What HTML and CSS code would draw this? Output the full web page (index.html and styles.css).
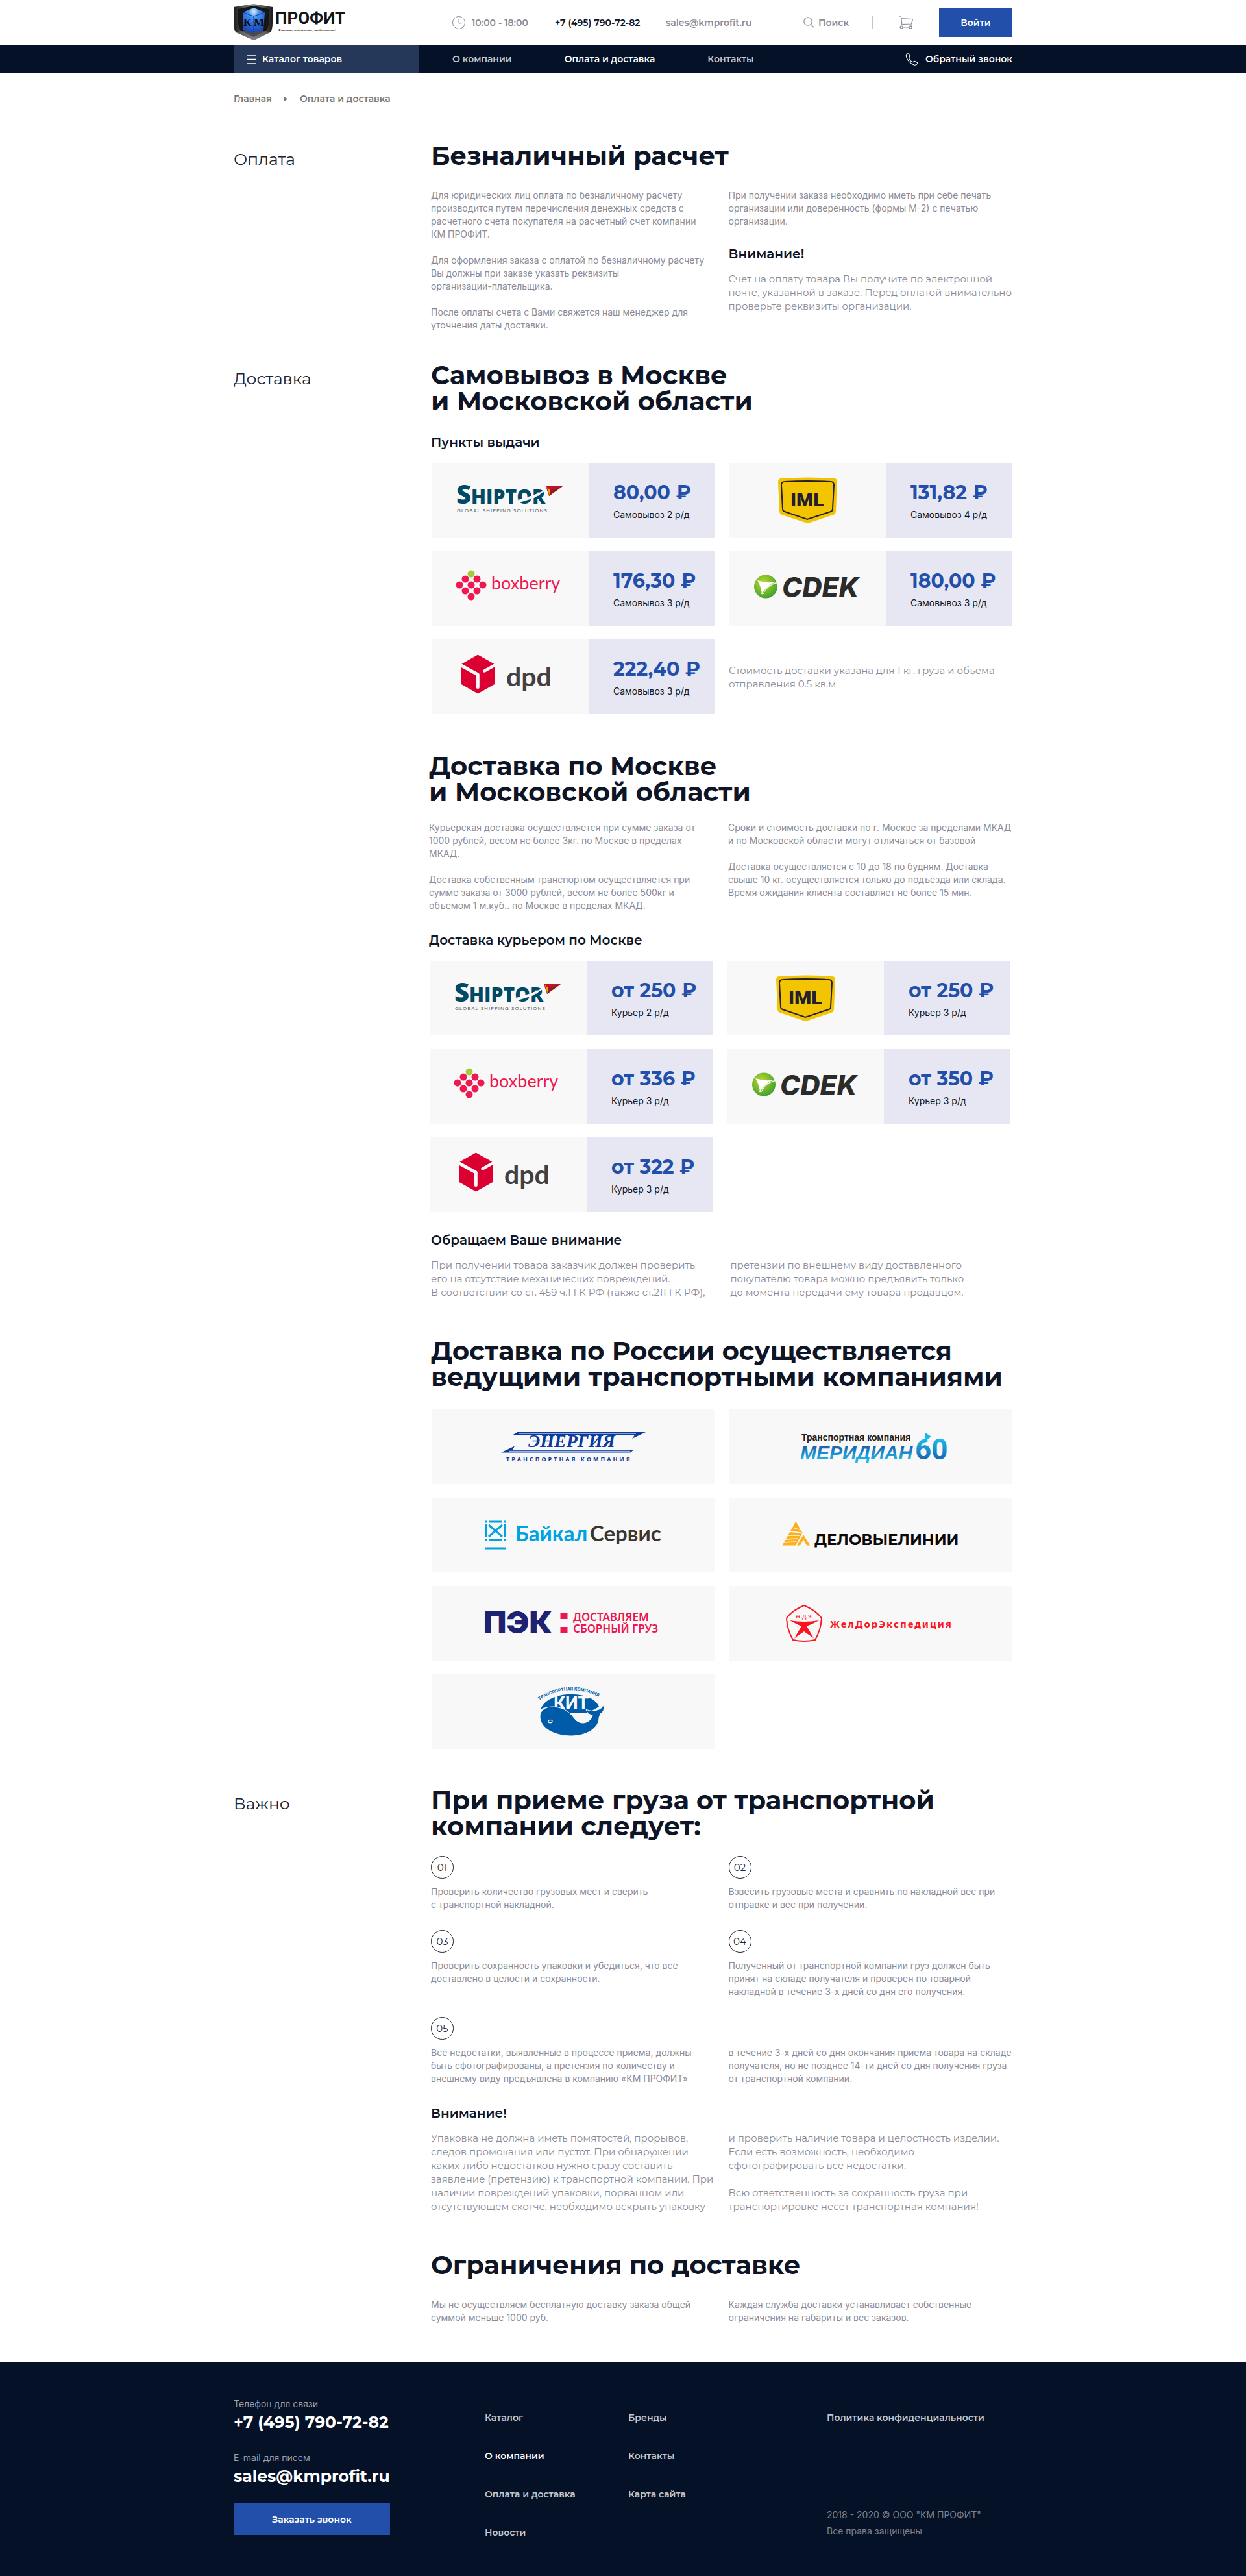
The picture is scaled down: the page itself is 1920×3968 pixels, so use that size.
FILE: index.html
```html
<!DOCTYPE html>
<html lang="ru">
<head>
<meta charset="utf-8">
<meta name="viewport" content="width=device-width, initial-scale=1">
<title>Оплата и доставка — КМ ПРОФИТ</title>
<link rel="stylesheet" href="styles.css">
</head>
<body>

<!-- Shared gradients -->
<svg class="sprite" aria-hidden="true">
  <defs>
    <radialGradient id="globe" cx="40%" cy="35%" r="75%"><stop offset="0" stop-color="#c3d82c"/><stop offset="1" stop-color="#2f9a2f"/></radialGradient>
    <linearGradient id="sky" x1="0" y1="0" x2="0" y2="1"><stop offset="0.2" stop-color="#1a63ae"/><stop offset="0.85" stop-color="#1fb6e8"/></linearGradient>
    <linearGradient id="sea" x1="0" y1="0" x2="0" y2="1"><stop offset="0.2" stop-color="#1fb6e8"/><stop offset="0.85" stop-color="#1460ac"/></linearGradient>
    <linearGradient id="metal" x1="0" y1="0" x2="1" y2="0"><stop offset="0" stop-color="#1c1c1c"/><stop offset="0.5" stop-color="#8d8d8d"/><stop offset="1" stop-color="#1c1c1c"/></linearGradient>
    <radialGradient id="cube" cx="50%" cy="15%" r="80%"><stop offset="0" stop-color="#d8f0ff"/><stop offset="0.3" stop-color="#3f8fee"/><stop offset="1" stop-color="#1c48b8"/></radialGradient>
  </defs>
</svg>

<!-- Carrier logos, copied into the price cards by logos.js -->
<template id="shiptor"><svg class="logo" viewBox="0 0 242 115" role="img" aria-label="Shiptor">
  <text class="lg-shiptor" x="38" y="63"><tspan class="lg-shiptor-cap">S</tspan>HIPTOR</text>
  <path d="M124 66 136 56l20-6 24-10-22 14-19 6z" fill="#f8f8f8"/>
  <path d="M176 36h26l-21 15z" fill="#c8102e"/><path d="M182 42 202 36 181 51z" fill="#8a2020"/><path d="M176 36l7 6-2 9-1-9z" fill="#f5a800"/>
  <text class="lg-shiptor-sub" x="39" y="76">GLOBAL SHIPPING SOLUTIONS</text>
</svg></template>
<template id="iml"><svg class="logo" viewBox="0 0 242 115" role="img" aria-label="IML">
  <path d="M81 24q40-3 81 0 5 0 5 5l-2 45q0 5-4 6l-36 12q-4 1-7 0L82 80q-4-1-4-6l-2-45q0-5 5-5z" fill="#f2c500"/>
  <path d="M86 29q36-2 71 0 5 0 5 5l-2 37q0 3-3 4l-36 12-35-12q-3-1-3-4l-2-37q0-5 5-5z" fill="none" stroke="#251e33" stroke-width="2"/>
  <text class="lg-iml" x="95" y="67">IML</text>
</svg></template>
<template id="boxberry"><svg class="logo" viewBox="0 0 242 115" role="img" aria-label="Boxberry">
  <circle cx="61" cy="35" r="5.5" fill="#a4cb38"/>
  <g fill="#f01850"><circle cx="52" cy="43" r="5.5"/><circle cx="70" cy="43" r="5.5"/><circle cx="43" cy="52" r="5.5"/><circle cx="61" cy="52" r="5.5"/><circle cx="79" cy="52" r="5.5"/><circle cx="52" cy="61" r="5.5"/><circle cx="70" cy="61" r="5.5"/><circle cx="61" cy="70" r="5.5"/></g>
  <text class="lg-boxberry" x="92" y="59">boxberry</text>
</svg></template>
<template id="cdek"><svg class="logo" viewBox="0 0 242 115" role="img" aria-label="CDEK">
  <circle cx="57" cy="54.5" r="18" fill="url(#globe)"/>
  <path d="M44 45q15 5 29 2-16 6-22 20-1-13-7-22z" fill="#fff"/><path d="M53 66q6-13 21-18M50 66q8-14 24-17" stroke="#fff" fill="none"/>
  <text class="lg-cdek" x="82" y="71">CDEK</text>
</svg></template>
<template id="dpd"><svg class="logo" viewBox="0 0 242 115" role="img" aria-label="DPD">
  <path d="M71.3 23.5 98 38.5v30L71.3 83.5 45 68.5v-30z" fill="#dc0032"/>
  <path d="M43 38.5 71.3 54v19.5" fill="none" stroke="#f8f8f8" stroke-width="5" stroke-linejoin="round" stroke-linecap="round"/>
  <path d="M100 38 81.5 48.5" stroke="#f8f8f8" stroke-width="4.5" stroke-linecap="round"/>
  <text class="lg-dpd" x="115" y="72">dpd</text>
</svg></template>

<header class="header">
  <div class="container topbar">
    <a class="brand" href="#" aria-label="КМ Профит">
      <svg width="180" height="60" viewBox="0 0 180 60">
        <path d="M31 1 60 6v24q0 12-4 15L31 57 4 45Q0 42 0 30V6z" fill="url(#metal)"/>
        <path d="M31 4 54 9v20q0 10-5 14L31 52 12 43Q7 39 7 29V9z" fill="#161616"/>
        <path d="M4 45 31 37 56 45 31 57z" fill="#777" opacity=".55"/>
        <path d="M31 7 48 14 46 41 31 46 15 41 14 14z" fill="url(#cube)"/>
        <path d="M31 19v27M14 14l17 6 17-6" stroke="#123a9c" fill="none"/>
        <text class="lg-km" x="15" y="35">К</text><text class="lg-km" x="31" y="35">М</text>
        <text class="lg-profit" x="64" y="32">ПРОФИТ</text>
        <text class="lg-tagline" x="69" y="43">Качество, надежность, стабильность!</text>
      </svg>
    </a>
    <div class="hours">
      <svg width="20" height="20" viewBox="0 0 20 20" fill="none" stroke="#8b8b98"><circle cx="10" cy="10" r="9.5"/><path d="M10 5v6h4"/></svg>
      10:00 - 18:00
    </div>
    <a class="phone" href="tel:+74957907282">+7 (495) 790-72-82</a>
    <a class="mail" href="mailto:sales@kmprofit.ru">sales@kmprofit.ru</a>
    <button class="search" type="button">
      <svg width="17" height="17" viewBox="0 0 17 17" fill="none" stroke="#8b8b98" stroke-width="1.2"><circle cx="7" cy="7" r="6.2"/><path d="M11.500 11.500 16.500 16.500"/></svg>
      Поиск
    </button>
    <a class="cart" href="#" aria-label="Корзина">
      <svg width="22" height="21" viewBox="0 0 22 21" fill="none" stroke="#8b8b98" stroke-width="1.2"><path d="M0 1h2.500q1 0 1 1L5 14.500h14M4 4.500l17.500 1-2 7.500-14.500.500M5 14.500q-2 0-1.500 2.500M19 14.500V17M6 18h10"/><circle cx="4" cy="18" r="2"/><circle cx="18" cy="18" r="2"/></svg>
    </a>
    <button class="btn login" type="button">Войти</button>
  </div>
  <nav class="nav">
    <div class="container nav-row">
      <a class="catalog" href="#">
        <svg width="15" height="15" viewBox="0 0 15 15" stroke="#fff" stroke-width="1.4"><path d="M0 1h15M0 7.500h15M0 14h15"/></svg>
        Каталог товаров
      </a>
      <ul class="menu">
        <li><a href="#">О компании</a></li>
        <li><a href="#" class="current">Оплата и доставка</a></li>
        <li><a href="#">Контакты</a></li>
      </ul>
      <a class="callback" href="#">
        <svg width="20" height="20" viewBox="0 0 20 20" fill="none" stroke="#fff" stroke-width="1.1"><path d="M3.500 1Q5 .500 5.700 2L7 5q.500 1.200-.700 2-1.300.900-.600 2.300 1.500 3.200 4.800 5.200 1.200.600 2.100-.500 1-1.200 2.200-.600l3 1.500q1.400.800.700 2.100-1.500 2.500-4.500 2.200-4-.700-8-5Q1.700 9.500 1.200 5 1.200 2.200 3.500 1z"/></svg>
        Обратный звонок
      </a>
    </div>
  </nav>
</header>

<main class="container">
  <nav class="crumbs">
    <a href="#">Главная</a>
    <svg width="5" height="7" viewBox="0 0 5 7"><path d="M0 0 5 3.500 0 7z" fill="#777"/></svg>
    <a href="#">Оплата и доставка</a>
  </nav>

  <section class="section">
    <p class="label">Оплата</p>
    <div class="content">
      <div class="block">
        <h2>Безналичный расчет</h2>
        <div class="cols after-title">
          <div class="text">
            <p>Для юридических лиц оплата по безналичному расчету<br>производится путем перечисления денежных средств с<br>расчетного счета покупателя на расчетный счет компании<br>КМ ПРОФИТ.</p>
            <p>Для оформления заказа с оплатой по безналичному расчету<br>Вы должны при заказе указать реквизиты<br>организации-плательщика.</p>
            <p>После оплаты счета с Вами свяжется наш менеджер для<br>уточнения даты доставки.</p>
          </div>
          <div class="aside">
            <div class="text"><p>При получении заказа необходимо иметь при себе печать<br>организации или доверенность (формы М-2) с печатью<br>организации.</p></div>
            <h3>Внимание!</h3>
            <p class="note">Счет на оплату товара Вы получите по электронной<br>почте, указанной в заказе. Перед оплатой внимательно<br>проверьте реквизиты организации.</p>
          </div>
        </div>
      </div>
    </div>
  </section>

  <section class="section">
    <p class="label">Доставка</p>
    <div class="content">
      <div class="block">
        <h2>Самовывоз в Москве<br>и Московской области</h2>
        <h3>Пункты выдачи</h3>
        <ul class="cards">
          <li class="card" data-logo="shiptor"><div class="price"><strong>80,00 ₽</strong><span>Самовывоз 2 р/д</span></div></li>
          <li class="card" data-logo="iml"><div class="price"><strong>131,82 ₽</strong><span>Самовывоз 4 р/д</span></div></li>
          <li class="card" data-logo="boxberry"><div class="price"><strong>176,30 ₽</strong><span>Самовывоз 3 р/д</span></div></li>
          <li class="card" data-logo="cdek"><div class="price"><strong>180,00 ₽</strong><span>Самовывоз 3 р/д</span></div></li>
          <li class="card" data-logo="dpd"><div class="price"><strong>222,40 ₽</strong><span>Самовывоз 3 р/д</span></div></li>
          <li class="card-note note">Стоимость доставки указана для 1 кг. груза и объема<br>отправления 0.5 кв.м</li>
        </ul>
      </div>

      <div class="block courier">
        <h2>Доставка по Москве<br>и Московской области</h2>
        <div class="cols">
          <div class="text">
            <p>Курьерская доставка осуществляется при сумме заказа от<br>1000 рублей, весом не более 3кг. по Москве в пределах<br>МКАД.</p>
            <p>Доставка собственным транспортом осуществляется при<br>сумме заказа от 3000 рублей, весом не более 500кг и<br>объемом 1 м.куб.. по Москве в пределах МКАД.</p>
          </div>
          <div class="text">
            <p>Сроки и стоимость доставки по г. Москве за пределами МКАД<br>и по Московской области могут отличаться от базовой</p>
            <p>Доставка осуществляется с 10 до 18 по будням. Доставка<br>свыше 10 кг. осуществляется только до подъезда или склада.<br>Время ожидания клиента составляет не более 15 мин.</p>
          </div>
        </div>
        <h3>Доставка курьером по Москве</h3>
        <ul class="cards">
          <li class="card" data-logo="shiptor"><div class="price"><strong>от 250 ₽</strong><span>Курьер 2 р/д</span></div></li>
          <li class="card" data-logo="iml"><div class="price"><strong>от 250 ₽</strong><span>Курьер 3 р/д</span></div></li>
          <li class="card" data-logo="boxberry"><div class="price"><strong>от 336 ₽</strong><span>Курьер 3 р/д</span></div></li>
          <li class="card" data-logo="cdek"><div class="price"><strong>от 350 ₽</strong><span>Курьер 3 р/д</span></div></li>
          <li class="card" data-logo="dpd"><div class="price"><strong>от 322 ₽</strong><span>Курьер 3 р/д</span></div></li>
        </ul>
      </div>

      <div class="attention">
        <h3>Обращаем Ваше внимание</h3>
        <div class="cols note">
          <p>При получении товара заказчик должен проверить<br>его на отсутствие механических повреждений.<br>В соответствии со ст. 459 ч.1 ГК РФ (также ст.211 ГК РФ),</p>
          <p>претензии по внешнему виду доставленного<br>покупателю товара можно предъявить только<br>до момента передачи ему товара продавцом.</p>
        </div>
      </div>

      <div class="block">
        <h2>Доставка по России осуществляется<br>ведущими транспортными компаниями</h2>
        <ul class="cards companies">
          <li><svg class="logo" viewBox="0 0 437 115" role="img" aria-label="Энергия">
            <g fill="#0b3b9f"><path d="M132 35H330L309 45 313 39.500H125z"/><path d="M312 62 306 66.500H107L128 56.500 125 62z"/></g>
            <path d="M135 37.200h180M120 64.300h186" stroke="#f8f8f8" stroke-width=".8"/>
            <text class="lg-energy" x="149" y="58">ЭНЕРГИЯ</text><text class="lg-energy-sub" x="115" y="80">ТРАНСПОРТНАЯ КОМПАНИЯ</text></svg></li>
          <li><svg class="logo" viewBox="0 0 437 115" role="img" aria-label="Меридиан 60">
            <text class="lg-meridian-sub" x="112" y="48">Транспортная компания</text>
            <text class="lg-meridian" x="110" y="77" fill="url(#sky)">МЕРИДИАН</text>
            <text class="lg-sixty" x="287" y="77" fill="url(#sea)">60</text><path d="M303 36l9 6-9 6z" fill="#1fb6e8"/></svg></li>
          <li><svg class="logo" viewBox="0 0 437 115" role="img" aria-label="Байкал Сервис">
            <g fill="none" stroke="#00a2e1" stroke-width="3"><path d="M88 37h21M88 65h21M84.500 41v20M112.500 41v20M83 78h31"/><path d="M88 42 109 60M109 42 88 60"/></g>
            <g fill="#00a2e1"><path d="M83 35.500h3v3h-3zM111 35.500h3v3h-3zM83 63.500h3v3h-3zM111 63.500h3v3h-3z"/></g>
            <text class="lg-baikal" x="129" y="67" fill="#00a2e1">Байкал</text><text class="lg-baikal" x="244" y="67" fill="#3c3530">Сервис</text></svg></li>
          <li><svg class="logo" viewBox="0 0 437 115" role="img" aria-label="Деловые линии">
            <path d="M103.300 36.500 114 55 103 73.500H82.500z" fill="#fdb01e"/><path d="M115 57 125 73.500h-5l-5-9-5 9h-5z" fill="#fdb01e"/>
            <path d="M112 50 98 46M112 54 93 52M109 58 90 58M106 63 87 64M104 68 84 69M114 54 103 75" stroke="#f8f8f8" stroke-width="1.3"/>
            <text class="lg-dl" x="132" y="73">ДЕЛОВЫЕЛИНИИ</text></svg></li>
          <li><svg class="logo" viewBox="0 0 437 115" role="img" aria-label="ПЭК">
            <text class="lg-pek" x="80" y="73">ПЭК</text><path d="M198.500 42h11v9h-11zM198.500 63h11v9h-11z" fill="#ec1651"/>
            <text class="lg-pek-sub" x="218" y="54">ДОСТАВЛЯЕМ</text><text class="lg-pek-sub" x="218" y="72">СБОРНЫЙ ГРУЗ</text></svg></li>
          <li><svg class="logo" viewBox="0 0 437 115" role="img" aria-label="ЖелДорЭкспедиция">
            <path d="M116 30Q135 38 143 49.500 142 68 133 83q-17 4-34 0-9-15-10-33.500Q97 38 116 30z" fill="none" stroke="#fb1420" stroke-width="2"/>
            <path d="M94 53q22 4 45 0-9 5-19 9l11 18.500-15-10.500-15 10.500L112 62q-9-4-18-9z" fill="#fb1420"/>
            <text class="lg-jde-mark" x="102" y="50">Ж.Д.Э</text><text class="lg-jde" x="156" y="64">ЖелДорЭкспедиция</text></svg></li>
          <li><svg class="logo" viewBox="0 0 437 115" role="img" aria-label="Транспортная компания КИТ">
            <path id="kit-arc" d="M166 40Q216 8 270 42" fill="none"/>
            <text class="lg-kit-arc"><textPath href="#kit-arc">ТРАНСПОРТНАЯ КОМПАНИЯ</textPath></text>
            <path d="M168 54C174 39 192 31 215 31S253 38 258 50L240 60H192Q180 46 168 54z" fill="#005ba8"/>
            <text class="lg-kit" x="188" y="54">КИТ</text>
            <path d="M167 65c0-9 8-15 19-15 14 0 24 6 31 14 5 7 9 11 17 11 8-1 13-6 14-12-5-1-8-3-10-9 7 3 12 3 17 1 5-1 8-4 11-8 0 7-1 11-6 14l-2 6c0 15-18 28-43 28-27 0-48-13-48-30z" fill="#005ba8" stroke="#f8f8f8"/>
            <ellipse cx="183" cy="72.5" rx="3" ry="2.2" fill="#005ba8" stroke="#f8f8f8" stroke-width="1.3"/></svg></li>
        </ul>
      </div>
    </div>
  </section>

  <section class="section important">
    <p class="label">Важно</p>
    <div class="content">
      <div class="block">
        <h2>При приеме груза от транспортной<br>компании следует:</h2>
        <ol class="steps text">
          <li><span class="num">01</span><p>Проверить количество грузовых мест и сверить<br>с транспортной накладной.</p></li>
          <li><span class="num">02</span><p>Взвесить грузовые места и сравнить по накладной вес при<br>отправке и вес при получении.</p></li>
          <li><span class="num">03</span><p>Проверить сохранность упаковки и убедиться, что все<br>доставлено в целости и сохранности.</p></li>
          <li><span class="num">04</span><p>Полученный от транспортной компании груз должен быть<br>принят на складе получателя и проверен по товарной<br>накладной в течение 3-х дней со дня его получения.</p></li>
          <li class="wide"><span class="num">05</span><div class="cols"><p>Все недостатки, выявленные в процессе приема, должны<br>быть сфотографированы, а претензия по количеству и<br>внешнему виду предъявлена в компанию «КМ ПРОФИТ»</p><p>в течение 3-х дней со дня окончания приема товара на складе<br>получателя, но не позднее 14-ти дней со дня получения груза<br>от транспортной компании.</p></div></li>
        </ol>
        <h3>Внимание!</h3>
        <div class="cols note">
          <p>Упаковка не должна иметь помятостей, прорывов,<br>следов промокания или пустот. При обнаружении<br>каких-либо недостатков нужно сразу составить<br>заявление (претензию) к транспортной компании. При<br>наличии повреждений упаковки, порванном или<br>отсутствующем скотче, необходимо вскрыть упаковку</p>
          <div><p>и проверить наличие товара и целостность изделии.<br>Если есть возможность, необходимо<br>сфотографировать все недостатки.</p><p>Всю ответственность за сохранность груза при<br>транспортировке несет транспортная компания!</p></div>
        </div>
      </div>
      <div class="block">
        <h2>Ограничения по доставке</h2>
        <div class="cols text after-title">
          <p>Мы не осуществляем бесплатную доставку заказа общей<br>суммой меньше 1000 руб.</p>
          <p>Каждая служба доставки устанавливает собственные<br>ограничения на габариты и вес заказов.</p>
        </div>
      </div>
    </div>
  </section>
</main>

<footer class="footer">
  <div class="container footer-row">
    <div class="contacts">
      <p class="hint">Телефон для связи</p>
      <a class="big" href="tel:+74957907282">+7 (495) 790-72-82</a>
      <p class="hint">E-mail для писем</p>
      <a class="big" href="mailto:sales@kmprofit.ru">sales@kmprofit.ru</a>
      <button class="btn order" type="button">Заказать звонок</button>
    </div>
    <ul class="links">
      <li><a href="#">Каталог</a></li>
      <li><a href="#" class="current">О компании</a></li>
      <li><a href="#">Оплата и доставка</a></li>
      <li><a href="#">Новости</a></li>
    </ul>
    <ul class="links">
      <li><a href="#">Бренды</a></li>
      <li><a href="#">Контакты</a></li>
      <li><a href="#">Карта сайта</a></li>
    </ul>
    <div class="legal">
      <a href="#">Политика конфиденциальности</a>
      <p>2018 - 2020 © ООО "КМ ПРОФИТ"<br>Все права защищены</p>
    </div>
  </div>
</footer>
<script src="logos.js"></script>
</body>
</html>
```
FILE: logos.js
```js
// Puts the carrier's logo in front of the price in every card.
document.querySelectorAll("[data-logo]").forEach((card) => {
  const logo = document.getElementById(card.dataset.logo);
  card.prepend(logo.content.firstElementChild.cloneNode(true));
});
```
FILE: styles.css
```css
* { box-sizing: border-box; }
body {
  margin: 0;
  background: #fff;
  color: #0e1526;
  font: 400 14px/20px Inter, "Noto Sans", sans-serif;
}
h2, h3, p, ul, ol { margin: 0; padding: 0; }
ul, ol { list-style: none; }
a { color: inherit; text-decoration: none; }
button { border: 0; padding: 0; background: none; font: inherit; color: inherit; cursor: pointer; }
svg { display: block; flex: none; }
.sprite { position: absolute; width: 0; height: 0; }
.container { max-width: 1200px; margin: 0 auto; }

.header, .crumbs, .footer .links, .legal a, .btn, .label, h2, h3, .note, .num, .big, .price strong {
  font-family: Montserrat, Inter, sans-serif;
}

.btn { background: #224fa9; color: #fff; font-size: 14px; font-weight: 600; text-align: center; }

/* Header */
.topbar {
  display: grid;
  grid-template-columns: 337px 158px 171px 174px 144px 103px 113px;
  align-items: center;
  height: 69px;
  font-weight: 600;
  color: #8b8b98;
}
.hours { display: flex; align-items: center; gap: 10px; }
.phone { color: #0e1526; }
.search { display: flex; align-items: center; gap: 6px; height: 20px; padding-left: 37px; border-left: 1px solid #c4c4cc; }
.cart { display: flex; align-items: center; height: 20px; padding-left: 40px; border-left: 1px solid #c4c4cc; }
.login { height: 44px; }

.nav { background: #051127; color: #fff; font-weight: 600; }
.nav-row { display: flex; align-items: center; height: 44px; }
.catalog { display: flex; align-items: center; gap: 9px; width: 285px; height: 44px; padding-left: 20px; background: #26385a; }
.menu { display: flex; flex: 1; gap: 81px; padding-left: 52px; }
.menu a { color: #c3c6cd; }
.menu .current { color: #fff; }
.callback { display: flex; align-items: center; gap: 11px; }

.crumbs { display: flex; align-items: center; gap: 19px; padding: 29px 0 58px; font-weight: 600; color: #777; }

/* Sections */
.section { display: grid; grid-template-columns: 304px 1fr; padding-bottom: 47px; }
.important { margin-top: 12px; padding-bottom: 59px; }
.label { padding-top: 9px; font-size: 25px; line-height: 32px; color: #1c2334; }
.content { display: flex; flex-direction: column; gap: 60px; min-width: 0; }

h2 { font-size: 40px; line-height: 40px; font-weight: 700; white-space: nowrap; }
h3 { font-size: 20px; line-height: 24px; font-weight: 600; margin-top: 31px; }
.aside h3 { margin-top: 28px; }
.cols, .cards { display: grid; grid-template-columns: 1fr 1fr; column-gap: 21px; }
.cols { margin-top: 25px; }
.cols.after-title { margin-top: 31px; }
.text { color: #8b8b98; white-space: nowrap; }
.text p + p { margin-top: 20px; }
.cols.text p + p { margin-top: 0; }
.note { color: #8b8b98; font-size: 15px; line-height: 21px; white-space: nowrap; }
h3 + .note { margin-top: 16px; }
.note div p + p { margin-top: 21px; }

/* Carrier cards */
.cards { row-gap: 21px; margin-top: 20px; padding-left: 1px; }
.card { display: grid; grid-template-columns: 242px 1fr; background: #f8f8f8; }
.logo { width: 100%; height: 115px; }
.price { display: flex; flex-direction: column; gap: 4px; padding: 26px 0 0 38px; background: #e7e7f3; }
.price strong { font-size: 30px; line-height: 40px; color: #224fa9; }
.card-note { align-self: center; }
.courier { margin-left: -3px; }
.courier .cols { column-gap: 23px; }
.courier .cards { width: calc(100% - 3px); }
.attention { margin-top: -60px; }
.attention .cols { column-gap: 27px; }
.companies { margin-top: 30px; }
.companies li { background: #f8f8f8; }

/* Steps */
.steps { display: grid; grid-template-columns: 1fr 1fr; gap: 29px 21px; margin-top: 26px; }
.steps .wide { grid-column: 1 / -1; }
.steps .cols { margin-top: 0; }
.num {
  display: flex; align-items: center; justify-content: center;
  width: 35px; height: 35px; margin-bottom: 10px;
  border: 1px solid #1c2334; border-radius: 50%;
  font-size: 15px; color: #1c2334;
}
.steps p + p { margin-top: 0; }

/* Footer */
.footer { background: #051127; color: #fff; }
.footer-row { display: grid; grid-template-columns: 387px 221px 306px 1fr; padding: 54px 0 62px; }
.contacts { display: flex; flex-direction: column; align-items: flex-start; }
.hint { color: #9ba0ab; }
.big { margin: 2px 0 29px; font-size: 25px; line-height: 32px; font-weight: 700; }
.order { width: 241px; height: 49px; margin-top: -3px; }
.links { display: flex; flex-direction: column; gap: 39px; padding-top: 21px; font-weight: 600; color: #c3c6cd; }
.links .current { color: #fff; }
.legal { display: flex; flex-direction: column; justify-content: space-between; padding-top: 21px; font-weight: 600; color: #c3c6cd; }
.legal p { font-weight: 400; line-height: 25px; color: #7d828e; }

/* Logo lettering */
.lg-shiptor { font: 800 30px "Open Sans", sans-serif; fill: #004a66; }
.lg-shiptor-cap { font-size: 40px; }
.lg-shiptor-sub { font: 500 8px "Open Sans", sans-serif; letter-spacing: 1px; fill: #4c5258; }
.lg-iml { font: 900 30px Roboto, sans-serif; fill: #251e33; }
.lg-boxberry { font: 400 27px Lato, sans-serif; fill: #f01850; }
.lg-cdek { font: italic 800 42px Inter, sans-serif; fill: #2b2b29; }
.lg-dpd { font: 700 41px Lato, sans-serif; fill: #414042; }
.lg-km { font: 700 17px "Liberation Serif", serif; fill: #050a18; }
.lg-profit { font: 700 26px Roboto, sans-serif; fill: #161616; }
.lg-tagline { font: italic 700 5px "Liberation Serif", serif; fill: #222; }
.lg-energy { font: italic 700 28px "Liberation Serif", serif; fill: #0b3b9f; }
.lg-energy-sub { font: 700 9px "Open Sans", sans-serif; letter-spacing: 3px; fill: #0b3b9f; }
.lg-meridian-sub { font: 700 14px "Liberation Sans", sans-serif; fill: #222; }
.lg-meridian { font: italic 700 30px "Liberation Sans", sans-serif; }
.lg-sixty { font: 700 44px Roboto, sans-serif; }
.lg-baikal { font: 700 33px Lato, sans-serif; }
.lg-dl { font: 700 23px Montserrat, sans-serif; fill: #0a0a0a; }
.lg-pek { font: 900 47px Inter, sans-serif; fill: #1d2272; }
.lg-pek-sub { font: 600 17px "Noto Sans", sans-serif; fill: #ec1651; }
.lg-jde { font: small-caps 700 15px "Noto Sans", sans-serif; letter-spacing: 2px; fill: #fb1420; }
.lg-jde-mark { font: 700 9px "Liberation Serif", serif; fill: #fb1420; }
.lg-kit { font: 700 28px Roboto, sans-serif; fill: #f8f8f8; }
.lg-kit-arc { font: 700 7px Roboto, sans-serif; fill: #005ba8; }

@media (max-width: 1240px) {
  .topbar, .nav-row, .footer-row { display: flex; flex-wrap: wrap; height: auto; gap: 20px; padding: 16px; }
  main { padding: 0 16px; }
  .section, .cols, .cards { grid-template-columns: 1fr; }
  h2, .text, .note { white-space: normal; }
}
```
